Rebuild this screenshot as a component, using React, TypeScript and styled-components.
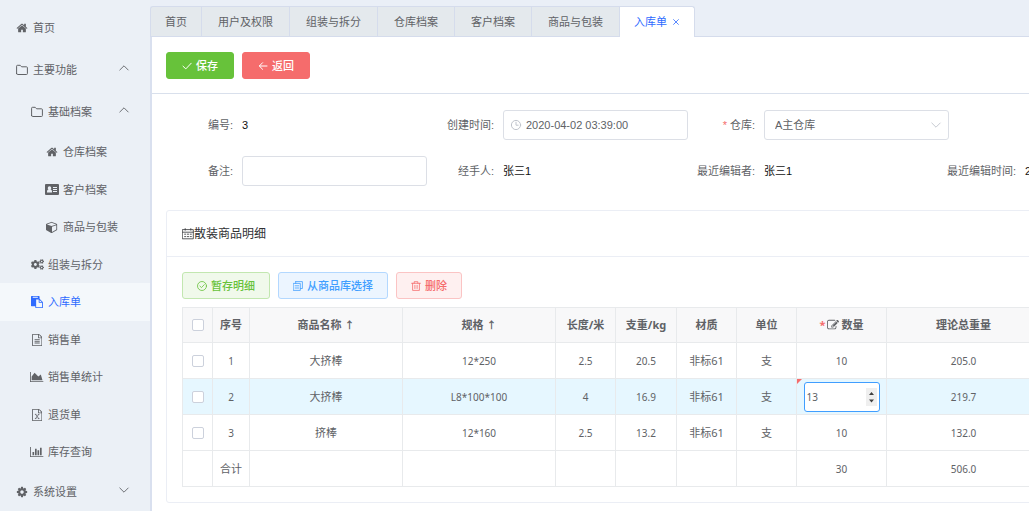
import React from "react";
import styled, { createGlobalStyle, css } from "styled-components";
import { FaCogs } from "react-icons/fa";

const sans = `"Liberation Sans", "Noto Sans CJK SC", sans-serif`;
const ui = `"Noto Sans", "Noto Sans CJK SC", sans-serif`;

const GlobalStyle = createGlobalStyle`
  *, *::before, *::after { box-sizing: border-box; }
  body {
    margin: 0;
    background: #fff;
    color: #606266;
    font: 11px/16px ${sans};
    overflow: hidden;
  }
  button, input, select { font: inherit; color: inherit; margin: 0; }
  ul { list-style: none; margin: 0; padding: 0; }
`;

/* ---------- icons ---------- */

const Svg = styled.svg<{ $size?: number }>`
  display: block;
  flex: none;
  height: ${(p) => p.$size ?? 12}px;
  width: auto;
  fill: currentColor;
`;

const LineSvg = styled(Svg)`
  fill: none;
  stroke: currentColor;
  stroke-linecap: round;
  stroke-linejoin: round;
`;

const HomeIcon = () => (
  <Svg viewBox="0 0 1792 1792" aria-hidden="true">
    <path d="M1472 992v480q0 26-19 45t-45 19h-384v-384h-256v384h-384q-26 0-45-19t-19-45v-480q0-1 .5-3t.5-3l575-474 575 474q1 2 1 6zm223-69l-62 74q-8 9-21 11h-3q-13 0-21-7l-692-577-692 577q-12 8-24 7-13-2-21-11l-62-74q-8-10-7-23.5t11-21.5l719-599q32-26 76-26t76 26l244 204v-195q0-14 9-23t23-9h192q14 0 23 9t9 23v408l219 182q10 8 11 21.5t-7 23.5z" />
  </Svg>
);

const AddressCardIcon = () => (
  <Svg viewBox="0 0 28 22" $size={11} aria-hidden="true">
    <path
      fillRule="evenodd"
      d="M2 0h24q2 0 2 2v18q0 2-2 2H2q-2 0-2-2V2q0-2 2-2zM4 17h10v-2q0-4-3-4 1.500-1.200 1.500-3.200 0-3.300-3.500-3.300t-3.500 3.300q0 2 1.500 3.200-3 0-3 4zM16 6v2h8V6zM16 10v2h8v-2zM16 14v2h8v-2z"
    />
  </Svg>
);

const CubeIcon = () => (
  <Svg viewBox="0 0 1664 1792" aria-hidden="true">
    <path d="M896 1629l640-349v-636l-640 233v752zm-64-865l698-254-698-254-698 254zm832-252v768q0 35-18 65t-49 47l-704 384q-28 16-61 16t-61-16l-704-384q-31-17-49-47t-18-65v-768q0-40 23-73t61-47l704-256q22-8 44-8t44 8l704 256q38 14 61 47t23 73z" />
  </Svg>
);

const PasteIcon = () => (
  <Svg viewBox="0 0 1792 1792" aria-hidden="true">
    <path d="M768 1664h896v-640h-416q-40 0-68-28t-28-68v-416h-384v1152zm256-1440v-64q0-13-9.5-22.5t-22.5-9.5h-704q-13 0-22.5 9.5t-9.5 22.5v64q0 13 9.5 22.5t22.5 9.5h704q13 0 22.5-9.5t9.5-22.5zm256 672h299l-299-299v299zm512 128v672q0 40-28 68t-68 28h-960q-40 0-68-28t-28-68v-160h-544q-40 0-68-28t-28-68v-1344q0-40 28-68t68-28h1088q40 0 68 28t28 68v328q21 13 36 28l408 408q28 28 48 76t20 88z" />
  </Svg>
);

const pageOutline =
  "M1596 380q28 28 48 76t20 88v1152q0 40-28 68t-68 28h-1344q-40 0-68-28t-28-68v-1600q0-40 28-68t68-28h896q40 0 88 20t76 48zm-444-244v376h376q-10-29-22-41l-313-313q-12-12-41-22zm384 1528v-1024h-416q-40 0-68-28t-28-68v-416h-768v1536h1280z";

const FileTextIcon = () => (
  <Svg viewBox="128 0 1536 1792" aria-hidden="true">
    <path d={pageOutline} />
    <path d="M512 768h768v128h-768zM512 1024h768v128h-768zM512 1280h768v128h-768z" />
  </Svg>
);

const FileSheetIcon = () => (
  <Svg viewBox="128 0 1536 1792" aria-hidden="true">
    <path d={pageOutline} />
    <path
      d="M560 800h230M1000 800h230M560 1430h230M1000 1430h230M660 800l470 630M1130 800l-470 630"
      fill="none"
      stroke="currentColor"
      strokeWidth="120"
    />
  </Svg>
);

const AreaChartIcon = () => (
  <Svg viewBox="0 128 2048 1536" $size={10} aria-hidden="true">
    <path d="M2048 1536v128h-2048v-1536h128v1408h1920zm-384-1024l256 896h-1664v-576l448-576 576 576z" />
  </Svg>
);

const BarChartIcon = () => (
  <Svg viewBox="0 128 2048 1536" $size={10} aria-hidden="true">
    <path d="M640 896v512h-256v-512h256zm384-512v1024h-256v-1024h256zm1024 1152v128h-2048v-1536h128v1408h1920zm-640-896v768h-256v-768h256zm384-384v1152h-256v-1152h256z" />
  </Svg>
);

const CogIcon = () => (
  <Svg viewBox="0 0 1792 1792" aria-hidden="true">
    <path d="M1152 896q0-106-75-181t-181-75-181 75-75 181 75 181 181 75 181-75 75-181zm512-109v222q0 12-8 23t-20 13l-185 28q-19 54-39 91 35 50 107 138 10 12 10 25t-9 23q-27 37-99 108t-94 71q-12 0-26-9l-138-108q-44 23-91 38-16 136-29 186-7 28-36 28h-222q-14 0-24.5-8.5t-11.5-21.5l-28-184q-49-16-90-37l-141 107q-10 9-25 9-14 0-25-11-126-114-165-168-7-10-7-23 0-12 8-23 15-21 51-66.5t54-70.5q-27-50-41-99l-183-27q-13-2-21-12.5t-8-23.5v-222q0-12 8-23t19-13l186-28q14-46 39-92-40-57-107-138-10-12-10-24 0-10 9-23 26-36 98.5-107.5t94.5-71.5q13 0 26 10l138 107q44-23 91-38 16-136 29-186 7-28 36-28h222q14 0 24.5 8.5t11.5 21.5l28 184q49 16 90 37l142-107q9-9 24-9 13 0 25 10 129 119 165 170 7 8 7 22 0 12-8 23-15 21-51 66.5t-54 70.5q26 50 41 98l183 28q13 2 21 12.5t8 23.5z" />
  </Svg>
);

const EditIcon = () => (
  <Svg viewBox="0 0 1792 1792" aria-hidden="true">
    <path d="M888 1184l116-116-152-152-116 116v56h96v96h56zm440-720q-16-16-33 1l-350 350q-17 17-1 33t33-1l350-350q17-17 1-33zm80 594v190q0 119-84.5 203.5t-203.5 84.5h-832q-119 0-203.5-84.5t-84.5-203.5v-832q0-119 84.5-203.5t203.5-84.5h832q63 0 117 25 15 7 18 23 3 17-9 29l-49 49q-14 14-32 8-23-6-45-6h-832q-66 0-113 47t-47 113v832q0 66 47 113t113 47h832q66 0 113-47t47-113v-126q0-13 9-22l64-64q15-15 35-7t20 29zm-96-738l288 288-672 672h-288v-288zm444 132l-92 92-288-288 92-92q28-28 68-28t68 28l152 152q28 28 28 68t-28 68z" />
  </Svg>
);

const FolderIcon = () => (
  <LineSvg viewBox="0 0 12 12" aria-hidden="true">
    <path d="M.6 9.6V2.2q0-.9.9-.9h2.700l1.400 1.500h4.900q.9 0 .9.9v5.900q0 .9-.9.9h-9q-.9 0-.9-.9z" />
  </LineSvg>
);

const ChevronIcon = ({ up = false }: { up?: boolean }) => (
  <LineSvg viewBox="0 0 12 12" strokeWidth=".9" aria-hidden="true">
    <path d={up ? "M1.800 8l4.200-4.200L10.200 8" : "M1.800 4l4.200 4.200L10.200 4"} />
  </LineSvg>
);

const ClockIcon = () => (
  <LineSvg viewBox="0 0 12 12" aria-hidden="true">
    <circle cx="6" cy="6" r="4.600" />
    <path d="M6 3.200v3h2.200" />
  </LineSvg>
);

const CheckIcon = () => (
  <LineSvg viewBox="0 0 10 10" $size={10} aria-hidden="true">
    <path d="M1 5.200l2.800 2.700L9.200 2.200" />
  </LineSvg>
);

const BackIcon = () => (
  <LineSvg viewBox="0 0 10 10" $size={10} aria-hidden="true">
    <path d="M9 5H1.400M4.600 1.700L1.300 5l3.300 3.300" />
  </LineSvg>
);

const CircleCheckIcon = () => (
  <LineSvg viewBox="0 0 10 10" $size={10} strokeWidth=".8" aria-hidden="true">
    <circle cx="5" cy="5" r="4.500" />
    <path d="M2.900 5.100l1.600 1.500 2.800-3" />
  </LineSvg>
);

const CopyIcon = () => (
  <LineSvg viewBox="0 0 10 10" $size={10} strokeWidth=".8" aria-hidden="true">
    <path d="M2.700.6h6.700v6.900H7.500M.6 2.400h6.700v7H.6zM2.700.6v1.800M2.100 4.800h3.600M2.100 7h3.600" />
  </LineSvg>
);

const TrashIcon = () => (
  <LineSvg viewBox="0 0 10 10" $size={10} strokeWidth=".8" aria-hidden="true">
    <path d="M.6 2.300h8.800M3.200 2.300V.7h3.600v1.600M1.600 2.300v7.100h6.800V2.300M3.900 4.300v3.200M6.100 4.300v3.200" />
  </LineSvg>
);

const CalendarIcon = () => (
  <LineSvg viewBox="0 0 12 12" strokeWidth=".8" aria-hidden="true">
    <path d="M.7 1.600h10.600v9.200H.7zM.7 4.200h10.600M3.200.6v1.600M8.800.6v1.600M2.600 6.200h1.200M5.400 6.200h1.200M8.200 6.200h1.200M2.600 8.600h1.200M5.400 8.600h1.200M8.200 8.600h1.200" />
  </LineSvg>
);

const CloseIcon = () => (
  <LineSvg viewBox="0 0 8 8" $size={8} strokeWidth=".8" aria-hidden="true">
    <path d="M1.600 1.600l4.800 4.800M6.400 1.600L1.600 6.400" />
  </LineSvg>
);

const SpinnerIcon = () => (
  <Svg viewBox="0 0 11 18" $size={18} aria-hidden="true">
    <path d="M0 0h11v18H0z" fill="#efefef" />
    <path d="M3 7l2.500-3L8 7zM3 11.500l2.500 3 2.500-3z" fill="#404040" />
  </Svg>
);

/* ---------- shell ---------- */

const Page = styled.div`
  display: flex;
  height: 100vh;
  overflow: hidden;
  background: #eaeff7;
`;

const Sidebar = styled.nav`
  flex: 0 0 150px;
  padding-top: 7px;
  background: #ebf0f6;
  font-family: ${ui};
`;

const itemLayout = css`
  display: flex;
  align-items: center;
  width: 100%;
  gap: 4px;
  border: 0;
  background: none;
  text-align: left;
  text-decoration: none;
  color: #606266;
`;

const GroupButton = styled.button<{ $level: number }>`
  ${itemLayout}
  height: 42px;
  padding: 0 20px 0 ${(p) => p.$level * 15}px;
  > svg {
    margin-bottom: 4px;
  }
`;

const GroupName = styled.span`
  flex: 1;
`;

const MenuIcon = styled.span`
  display: flex;
  justify-content: center;
  width: 14px;
  font-size: 13px;
  flex: none;
`;

const HomeLink = styled.a`
  ${itemLayout}
  height: 42px;
  padding-left: 15px;
`;

const MenuLink = styled.a<{ $level: number; $active?: boolean }>`
  ${itemLayout}
  height: 38px;
  padding-left: ${(p) => p.$level * 15}px;
  li:nth-child(even) > & {
    height: 37px;
  }
  ${(p) =>
    p.$active &&
    css`
      background: #f4f8fb;
      color: #2e6bff;
    `}
`;

const Main = styled.main`
  flex: 1;
  min-width: 0;
  display: flex;
  flex-direction: column;
  padding-top: 6px;
`;

const TabBar = styled.div`
  display: flex;
  height: 31px;
  border-bottom: 1px solid #d5dcec;
  font-family: ${ui};
`;

const Tab = styled.button<{ $active?: boolean }>`
  display: flex;
  align-items: center;
  gap: 5px;
  height: 30px;
  padding: 0 16px;
  border: solid #d5dcec;
  border-width: 1px 0 0 1px;
  background: #e4e9ed;
  &:first-child {
    padding: 0 14px;
    border-top-left-radius: 3px;
  }
  ${(p) =>
    p.$active &&
    css`
      height: 31px;
      padding: 0 14px;
      border-right-width: 1px;
      border-top-right-radius: 3px;
      background: #fff;
      color: #2e6bff;
    `}
`;

const Content = styled.div`
  flex: 1;
  overflow: hidden;
  border-left: 2px solid #d9e0ef;
  background: #fff;
`;

const Toolbar = styled.div`
  display: flex;
  gap: 8px;
  padding: 15px 14px 14px;
  border-bottom: 1px solid #d9e0ec;
`;

const tones = {
  success: ["#67c23a", "#67c23a", "#fff"],
  danger: ["#f56c6c", "#f56c6c", "#fff"],
  successPlain: ["#f0f9eb", "#c2e7b0", "#67c23a"],
  primaryPlain: ["#ecf5ff", "#b3d8ff", "#409eff"],
  dangerPlain: ["#fef0f0", "#fbc4c4", "#f56c6c"],
};

const Button = styled.button<{ $tone: keyof typeof tones }>`
  display: flex;
  align-items: center;
  gap: 4px;
  height: 27px;
  padding: 0 15px;
  border: 1px solid ${(p) => tones[p.$tone][1]};
  border-radius: 3px;
  background: ${(p) => tones[p.$tone][0]};
  color: ${(p) => tones[p.$tone][2]};
  font-weight: 500;
`;

/* ---------- form ---------- */

const Form = styled.form`
  display: grid;
  grid-template-columns: repeat(4, 261px);
  row-gap: 16px;
  padding: 16px 14px 24px;
`;

const Field = styled.div`
  display: flex;
  align-items: center;
  height: 30px;
`;

const Label = styled.label`
  display: flex;
  justify-content: flex-end;
  flex: 0 0 76px;
  min-width: 0;
  padding-right: 9px;
  white-space: nowrap;
`;

const Required = styled.span`
  margin-right: 3px;
  color: #f56c6c;
`;

const Value = styled.output`
  color: #111;
  white-space: nowrap;
`;

const Control = styled.div`
  position: relative;
  flex: 1;
  color: #c0c4cc;
`;

const inputLook = css`
  display: block;
  width: 100%;
  height: 30px;
  border: 1px solid #dcdfe6;
  border-radius: 3px;
  background: #fff;
  color: #606266;
  outline: none;
`;

const TextInput = styled.input<{ $icon?: boolean }>`
  ${inputLook}
  padding: 0 11px 0 ${(p) => (p.$icon ? 22 : 11)}px;
`;

const Select = styled.select`
  ${inputLook}
  appearance: none;
  padding: 0 24px 0 10px;
`;

const Adornment = styled.span<{ $side: "left" | "right" }>`
  position: absolute;
  top: 9px;
  ${(p) => p.$side}: 7px;
  pointer-events: none;
`;

/* ---------- card and table ---------- */

const Card = styled.section`
  min-width: 900px;
  margin: 0 0 8px 14px;
  border: 1px solid #ebeef5;
  border-radius: 3px;
`;

const CardTitle = styled.h2`
  display: flex;
  align-items: center;
  height: 46px;
  margin: 0;
  padding: 0 15px;
  border-bottom: 1px solid #ebeef5;
  color: #303133;
  font: 400 12px/18px ${ui};
`;

const CardBody = styled.div`
  padding: 15px;
`;

const Actions = styled.div`
  display: flex;
  gap: 8px;
  margin-bottom: 8px;
  ${Button} {
    padding: 0 14px;
  }
`;

const Table = styled.table`
  table-layout: fixed;
  width: 859px;
  border-collapse: separate;
  border-spacing: 0;
  border: solid #e8eaec;
  border-width: 1px 0 0 1px;
  font-family: ${ui};
  text-align: center;
`;

const cell = css`
  height: 36px;
  padding: 0;
  border: solid #e8eaec;
  border-width: 0 1px 1px 0;
`;

const Th = styled.th`
  ${cell}
  height: 35px;
  background: #f8f8f9;
  font-weight: 700;
`;

const Td = styled.td<{ $numeric?: boolean }>`
  ${cell}
  position: relative;
  font-size: ${(p) => (p.$numeric ? 10 : 11)}px;
`;

const Tr = styled.tr<{ $current?: boolean }>`
  background: ${(p) => (p.$current ? "#e6f7ff" : "#fff")};
`;

const SortArrow = styled.span`
  font-family: "Noto Sans CJK SC", sans-serif;
  font-size: 10px;
`;

const HeadLabel = styled.span`
  display: flex;
  align-items: center;
  justify-content: center;
  gap: 2px;
  ${Required} {
    margin-right: 0;
  }
`;

const Checkbox = styled.input`
  appearance: none;
  display: block;
  width: 12px;
  height: 12px;
  margin: 0 auto;
  border: 1px solid #ccd1dc;
  border-radius: 2px;
  background: #fff;
`;

const DirtyMark = styled.i`
  position: absolute;
  top: 0;
  left: 0;
  border: solid transparent;
  border-width: 5px 5px 0 0;
  border-top-color: #f56c6c;
`;

const NumberBox = styled.div`
  position: relative;
  width: 76px;
  margin: 0 auto;
`;

const NumberInput = styled.input`
  display: block;
  width: 100%;
  height: 30px;
  padding: 0 2px;
  border: 1px solid #409eff;
  border-radius: 3px;
  background: #fff;
  outline: none;
  appearance: textfield;
`;

const Spinner = styled.span`
  position: absolute;
  top: 6px;
  right: 3px;
  pointer-events: none;
`;

const widths = [30, 37, 153, 153, 60, 61, 60, 60, 90, 154];

const rows = [
  { no: "1", name: "大挤棒", spec: "12*250", len: "2.5", weight: "20.5", qty: "10", total: "205.0" },
  { no: "2", name: "大挤棒", spec: "L8*100*100", len: "4", weight: "16.9", qty: "13", total: "219.7", current: true },
  { no: "3", name: "挤棒", spec: "12*160", len: "2.5", weight: "13.2", qty: "10", total: "132.0" },
];

const archiveLinks = [
  { icon: <HomeIcon />, label: "仓库档案" },
  { icon: <AddressCardIcon />, label: "客户档案" },
  { icon: <CubeIcon />, label: "商品与包装" },
];

const featureLinks = [
  { icon: <FaCogs />, label: "组装与拆分" },
  { icon: <PasteIcon />, label: "入库单", active: true },
  { icon: <FileTextIcon />, label: "销售单" },
  { icon: <AreaChartIcon />, label: "销售单统计" },
  { icon: <FileSheetIcon />, label: "退货单" },
  { icon: <BarChartIcon />, label: "库存查询" },
];

const tabs = ["首页", "用户及权限", "组装与拆分", "仓库档案", "客户档案", "商品与包装"];

type GroupProps = { level: number; icon: React.ReactNode; label: string; open?: boolean };

const Group = ({ level, icon, label, open = false }: GroupProps) => (
  <GroupButton type="button" $level={level} aria-expanded={open}>
    <MenuIcon>{icon}</MenuIcon>
    <GroupName>{label}</GroupName>
    <ChevronIcon up={open} />
  </GroupButton>
);

export default function App() {
  return (
    <Page>
      <GlobalStyle />
      <Sidebar>
        <ul>
          <li>
            <HomeLink href="#home">
              <MenuIcon><HomeIcon /></MenuIcon>
              首页
            </HomeLink>
          </li>
          <li>
            <Group level={1} icon={<FolderIcon />} label="主要功能" open />
            <ul>
              <li>
                <Group level={2} icon={<FolderIcon />} label="基础档案" open />
                <ul>
                  {archiveLinks.map((l) => (
                    <li key={l.label}>
                      <MenuLink href="#archive" $level={3}>
                        <MenuIcon>{l.icon}</MenuIcon>
                        {l.label}
                      </MenuLink>
                    </li>
                  ))}
                </ul>
              </li>
              {featureLinks.map((l) => (
                <li key={l.label}>
                  <MenuLink href="#feature" $level={2} $active={l.active}>
                    <MenuIcon>{l.icon}</MenuIcon>
                    {l.label}
                  </MenuLink>
                </li>
              ))}
            </ul>
          </li>
          <li>
            <Group level={1} icon={<CogIcon />} label="系统设置" />
          </li>
        </ul>
      </Sidebar>

      <Main>
        <TabBar role="tablist">
          {tabs.map((t) => (
            <Tab key={t} type="button" role="tab">{t}</Tab>
          ))}
          <Tab type="button" role="tab" aria-selected $active>
            入库单
            <CloseIcon />
          </Tab>
        </TabBar>

        <Content>
          <Toolbar>
            <Button type="button" $tone="success"><CheckIcon />保存</Button>
            <Button type="button" $tone="danger"><BackIcon />返回</Button>
          </Toolbar>

          <Form>
            <Field>
              <Label htmlFor="code">编号:</Label>
              <Value id="code">3</Value>
            </Field>
            <Field>
              <Label htmlFor="created">创建时间:</Label>
              <Control>
                <TextInput id="created" $icon defaultValue="2020-04-02 03:39:00" />
                <Adornment $side="left"><ClockIcon /></Adornment>
              </Control>
            </Field>
            <Field>
              <Label htmlFor="store"><Required>*</Required>仓库:</Label>
              <Control>
                <Select id="store"><option>A主仓库</option></Select>
                <Adornment $side="right"><ChevronIcon /></Adornment>
              </Control>
            </Field>
            <Field />
            <Field>
              <Label htmlFor="note">备注:</Label>
              <Control><TextInput id="note" /></Control>
            </Field>
            <Field>
              <Label htmlFor="handler">经手人:</Label>
              <Value id="handler">张三1</Value>
            </Field>
            <Field>
              <Label htmlFor="editor">最近编辑者:</Label>
              <Value id="editor">张三1</Value>
            </Field>
            <Field>
              <Label htmlFor="edited">最近编辑时间:</Label>
              <Value id="edited">2</Value>
            </Field>
          </Form>

          <Card>
            <CardTitle><CalendarIcon />散装商品明细</CardTitle>
            <CardBody>
              <Actions>
                <Button type="button" $tone="successPlain"><CircleCheckIcon />暂存明细</Button>
                <Button type="button" $tone="primaryPlain"><CopyIcon />从商品库选择</Button>
                <Button type="button" $tone="dangerPlain"><TrashIcon />删除</Button>
              </Actions>
              <Table>
                <colgroup>
                  {widths.map((w, i) => <col key={i} width={w} />)}
                </colgroup>
                <thead>
                  <Tr>
                    <Th><Checkbox type="checkbox" aria-label="全选" /></Th>
                    <Th>序号</Th>
                    <Th>商品名称 <SortArrow>↑</SortArrow></Th>
                    <Th>规格 <SortArrow>↑</SortArrow></Th>
                    <Th>长度/米</Th>
                    <Th>支重/kg</Th>
                    <Th>材质</Th>
                    <Th>单位</Th>
                    <Th><HeadLabel><Required>*</Required><EditIcon />数量</HeadLabel></Th>
                    <Th>理论总重量</Th>
                  </Tr>
                </thead>
                <tbody>
                  {rows.map((r) => (
                    <Tr key={r.no} $current={r.current}>
                      <Td><Checkbox type="checkbox" aria-label={r.no} /></Td>
                      <Td $numeric>{r.no}</Td>
                      <Td>{r.name}</Td>
                      <Td $numeric>{r.spec}</Td>
                      <Td $numeric>{r.len}</Td>
                      <Td $numeric>{r.weight}</Td>
                      <Td>非标61</Td>
                      <Td>支</Td>
                      <Td $numeric>
                        {r.current ? (
                          <>
                            <DirtyMark />
                            <NumberBox>
                              <NumberInput type="number" defaultValue={r.qty} aria-label="数量" />
                              <Spinner><SpinnerIcon /></Spinner>
                            </NumberBox>
                          </>
                        ) : (
                          r.qty
                        )}
                      </Td>
                      <Td $numeric>{r.total}</Td>
                    </Tr>
                  ))}
                </tbody>
                <tfoot>
                  <Tr>
                    <Td />
                    <Td>合计</Td>
                    <Td /><Td /><Td /><Td /><Td /><Td />
                    <Td $numeric>30</Td>
                    <Td $numeric>506.0</Td>
                  </Tr>
                </tfoot>
              </Table>
            </CardBody>
          </Card>
          <Card>
            <CardTitle />
          </Card>
        </Content>
      </Main>
    </Page>
  );
}
